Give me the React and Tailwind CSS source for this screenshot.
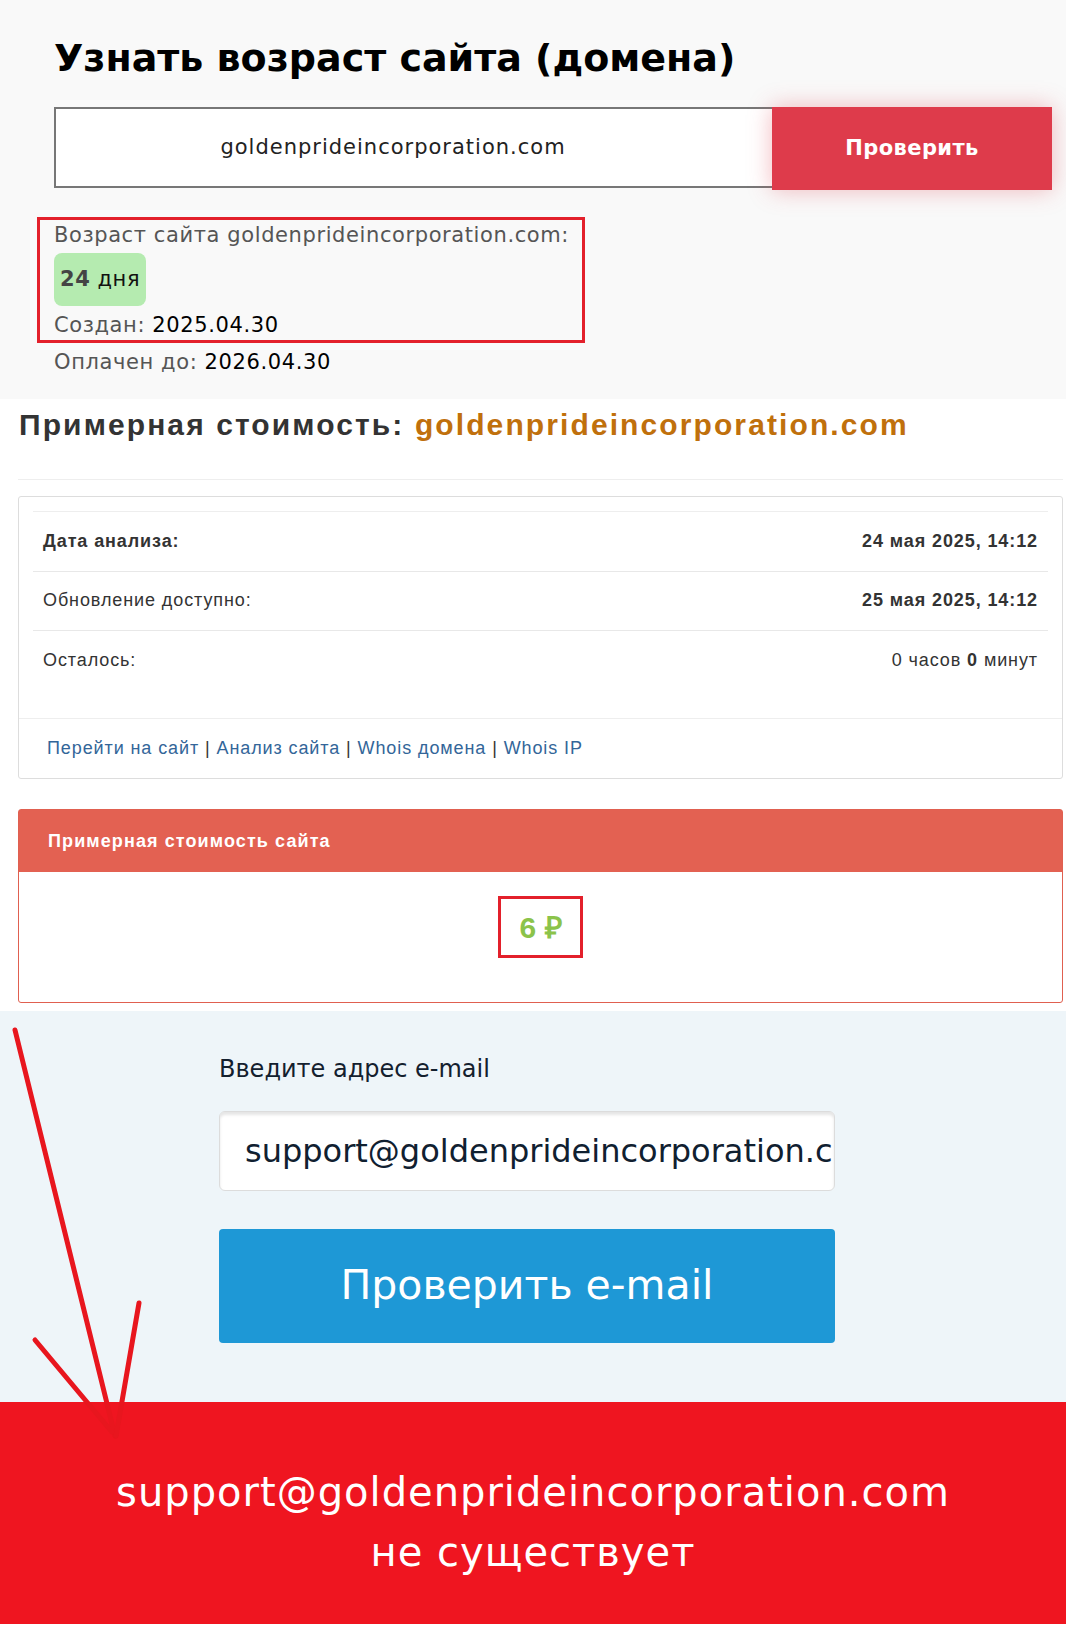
import React from 'react';

const Arrow = () => (
  <svg className="absolute left-0 top-0 pointer-events-none" width="1066" height="1625" viewBox="0 0 1066 1625">
    <g stroke="#e8161e" strokeWidth="5" strokeLinecap="round" fill="none">
      <path d="M15 1030 L115 1436" />
      <path d="M139 1303 L116 1436" />
      <path d="M35 1340 L112 1432" />
    </g>
  </svg>
);

const Row = ({ label, value, bold, last }) => (
  <div className={`flex items-center justify-between h-[59.5px] px-[10px] text-[18px] tracking-[0.9px] text-[#333] ${last ? '' : 'border-b border-[#e8e8e8]'}`}>
    <span className={bold ? 'font-bold' : ''}>{label}</span>
    <span>{value}</span>
  </div>
);

const App = () => {
  return (
    <div className="relative w-[1066px] min-h-[1625px] bg-white overflow-hidden">
      {/* Domain age */}
      <section className="bg-[#f9f9f9] h-[399px] pt-[38px] pl-[54px] font-['DejaVu_Sans',sans-serif]">
        <h1 className="text-[38px] leading-[41px] font-bold text-black whitespace-nowrap">Узнать возраст сайта (домена)</h1>
        <div className="flex mt-[28px]">
          <div className="w-[718px] shrink-0 h-[81px] bg-white border-2 border-r-0 border-[#777] flex items-center justify-center pr-[42px] text-[21px] tracking-[1px] text-[#222]">
            goldenprideincorporation.com
          </div>
          <button className="w-[280px] shrink-0 h-[83px] bg-[#de3b4b] text-white font-bold text-[21px] tracking-[0.4px] shadow-[0_0_22px_rgba(222,59,75,0.35)]">
            Проверить
          </button>
        </div>
        <div className="ml-[-17px] w-[548px] mt-[27px] border-[3px] border-[#e3202b] pl-[14px] text-[21px] tracking-[0.6px] text-[#555]">
          <div className="leading-[30px] whitespace-nowrap">Возраст сайта goldenprideincorporation.com:</div>
          <div className="mt-[3px] inline-flex items-center h-[53px] px-[6px] rounded-[8px] bg-[#b5ebb0]">
            <span className="font-bold text-[#444]">24</span>
            <span className="ml-[7px] text-[#111]">дня</span>
          </div>
          <div className="leading-[30px] mt-[4px]">
            Создан: <span className="text-black">2025.04.30</span>
          </div>
        </div>
        <div className="leading-[30px] mt-[4px] text-[21px] tracking-[0.6px] text-[#555]">
          Оплачен до: <span className="text-black">2026.04.30</span>
        </div>
      </section>

      {/* Estimated cost */}
      <section className="pl-[18px] pr-[3px] font-['Liberation_Sans',Arial,sans-serif]">
        <h2 className="pt-[6px] pl-[1px] h-[81px] text-[30px] leading-[40px] tracking-[2.1px] font-bold text-[#333] border-b border-[#eee] whitespace-nowrap">
          Примерная стоимость: <span className="text-[#c0700c]">goldenprideincorporation.com</span>
        </h2>
        <div className="mt-[16px] border border-[#ddd] rounded-[3px] h-[283px]">
          <div className="p-[14px] pb-0 h-[221px]">
            <div className="border-t border-[#eee]">
              <Row label="Дата анализа:" bold value={<b>24 мая 2025, 14:12</b>} />
              <Row label="Обновление доступно:" value={<b>25 мая 2025, 14:12</b>} />
              <Row label="Осталось:" last value={<span>0 часов <b>0</b> минут</span>} />
            </div>
          </div>
          <div className="border-t border-[#eee] h-[60px] flex items-center pl-[28px] text-[18px] tracking-[0.9px] text-[#333]">
            <span className="text-[#336699]">Перейти на сайт</span>&nbsp;|&nbsp;
            <span className="text-[#336699]">Анализ сайта</span>&nbsp;|&nbsp;
            <span className="text-[#336699]">Whois домена</span>&nbsp;|&nbsp;
            <span className="text-[#336699]">Whois IP</span>
          </div>
        </div>

        <div className="mt-[30px] border border-[#e06050] rounded-[3px] h-[194px]">
          <div className="h-[62px] bg-[#e36152] flex items-center pl-[29px] text-white font-bold text-[18px] tracking-[1.1px]">
            Примерная стоимость сайта
          </div>
          <div className="flex justify-center pt-[24px]">
            <div className="w-[85px] h-[62px] border-[3px] border-[#e3202b] flex items-center justify-center text-[30px] font-bold text-[#8bc34a]">
              6 ₽
            </div>
          </div>
        </div>
      </section>

      {/* E-mail check */}
      <section className="mt-[8px] bg-[#eef5f9] h-[391px] pt-[43px] font-['DejaVu_Sans',sans-serif]">
        <div className="ml-[219px] w-[616px]">
          <div className="text-[24px] leading-[30px] text-[#13202e]">Введите адрес e-mail</div>
          <div className="mt-[27px] h-[80px] bg-white rounded-[6px] border border-[#dcdcdc] shadow-[inset_0_3px_3px_rgba(0,0,0,0.1)] flex items-center pl-[25px] overflow-hidden whitespace-nowrap text-[32px] text-[#102030]">
            support@goldenprideincorporation.c
          </div>
          <button className="mt-[38px] w-full h-[114px] bg-[#1e98d6] rounded-[4px] text-white text-[41px]">
            Проверить e-mail
          </button>
        </div>
      </section>

      {/* Result */}
      <section className="bg-[#ef1520] h-[222px] pt-[60px] text-center text-white text-[40px] tracking-[1px] leading-[60px] font-['DejaVu_Sans',sans-serif]">
        <div>support@goldenprideincorporation.com</div>
        <div>не существует</div>
      </section>

      <Arrow />
    </div>
  );
};

export default App;
